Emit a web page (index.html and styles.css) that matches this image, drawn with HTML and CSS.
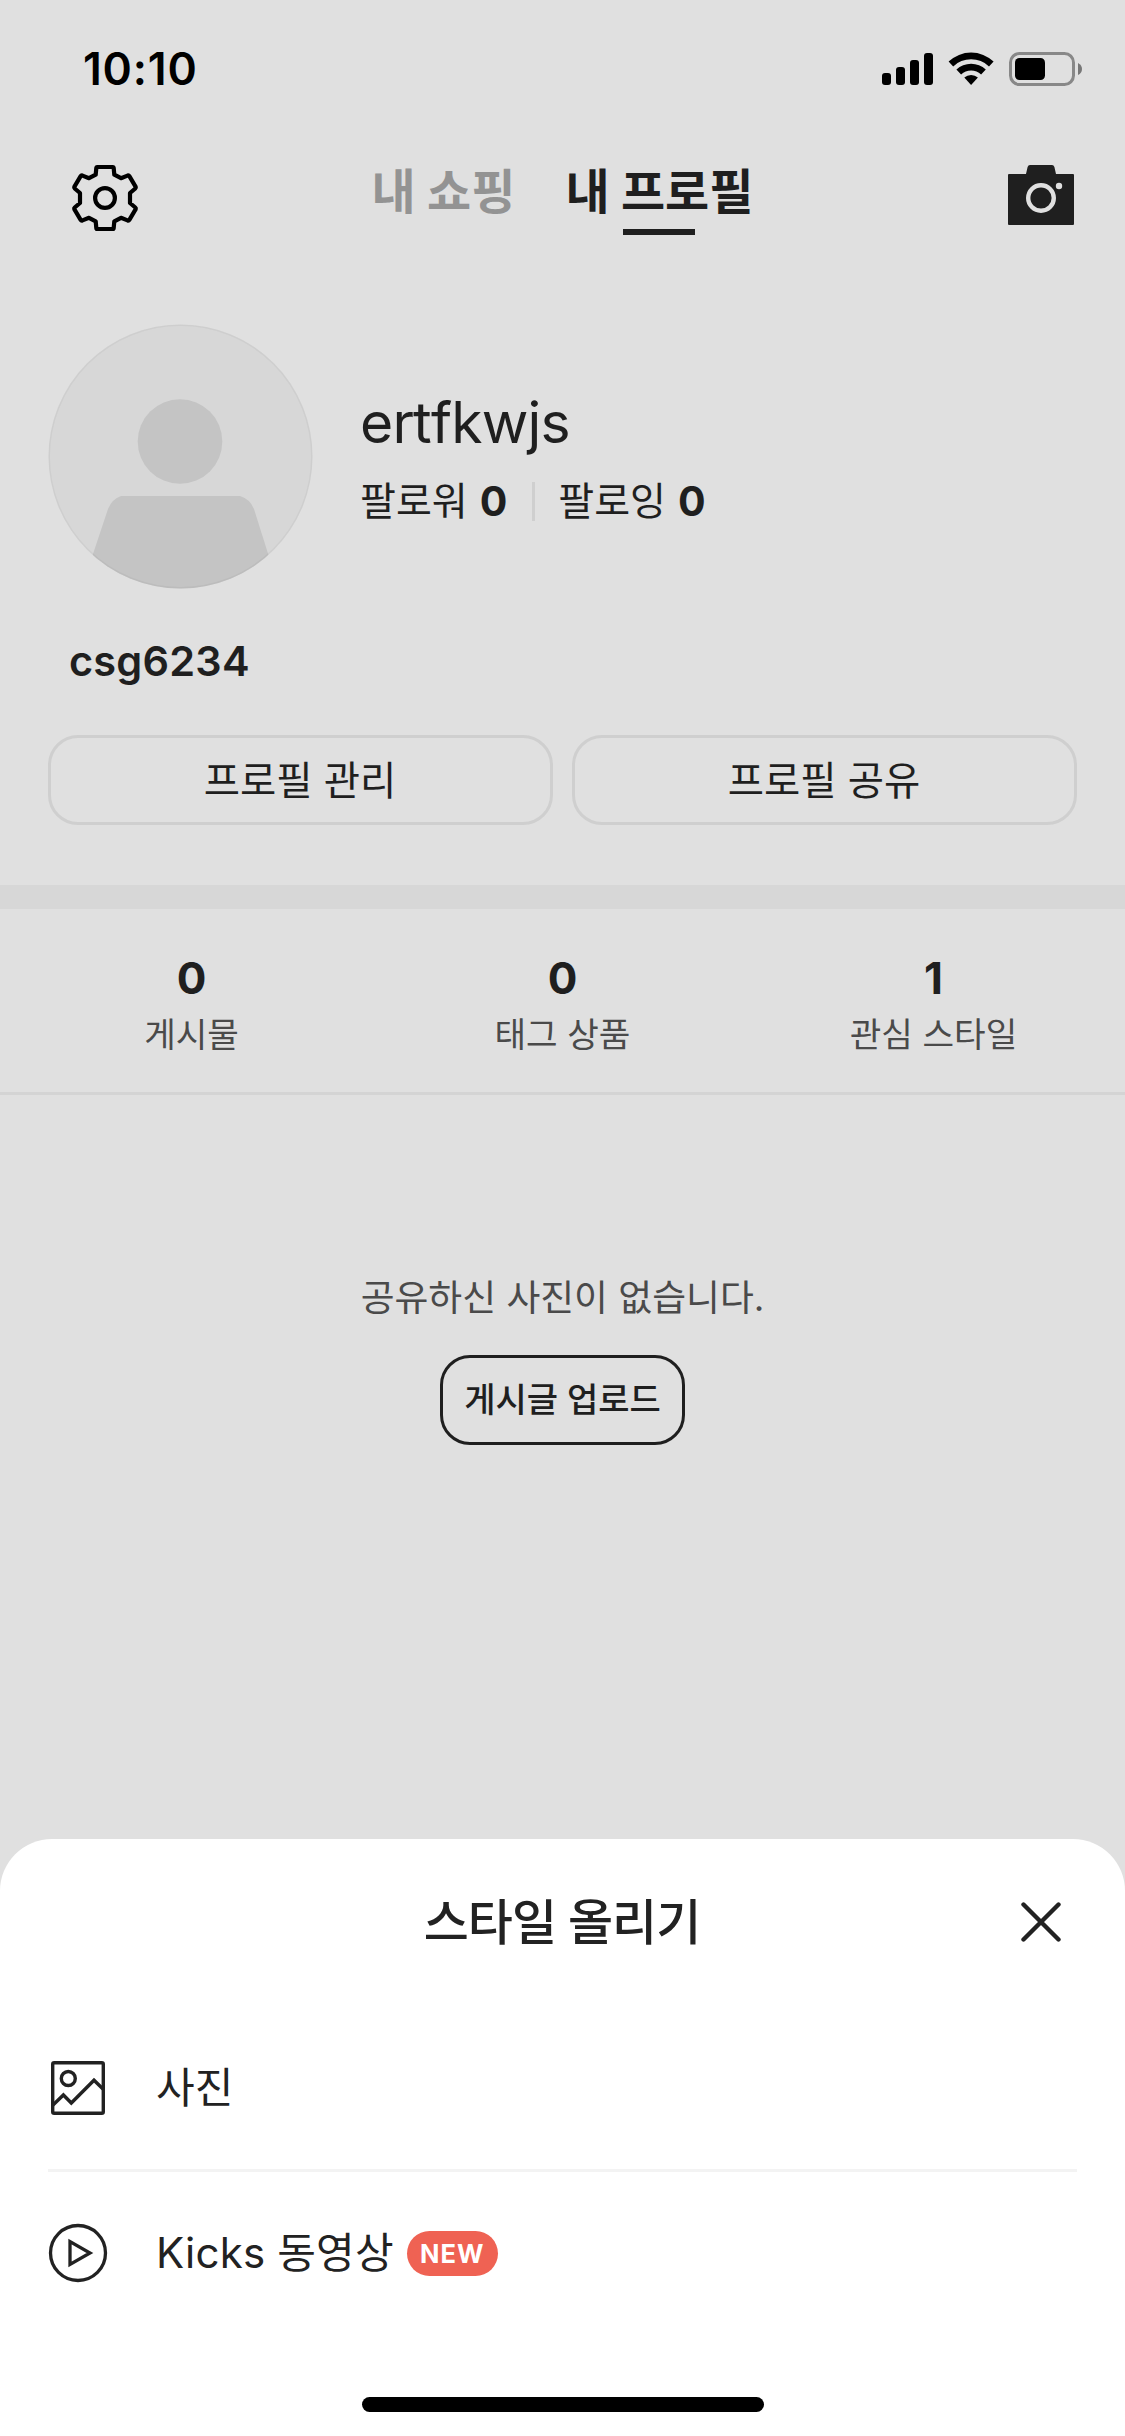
FILE: index.html
```html
<!DOCTYPE html>
<html lang="ko">
<head>
<meta charset="utf-8">
<title>내 프로필</title>
<link rel="stylesheet" href="styles.css">
</head>
<body>
<div class="screen">
  <header class="status">
    <span class="time">10:10</span>
    <svg class="status-icons" width="202" height="36" viewBox="881 51 202 36">
      <rect x="882" y="73" width="9" height="12" rx="3"/>
      <rect x="896" y="67" width="9" height="18" rx="3"/>
      <rect x="910" y="60" width="9" height="25" rx="3"/>
      <rect x="924" y="53" width="9" height="32" rx="3"/>
      <path d="M948.6 61.6A32.5 32.5 0 0 1 993.6 61.6L989 66.4A26 26 0 0 0 953.2 66.4Z"/>
      <path d="M956.4 69.6A21.3 21.3 0 0 1 985.8 69.6L981.1 74.4A14.7 14.7 0 0 0 961.1 74.4Z"/>
      <path d="M964.3 77.6A10 10 0 0 1 977.9 77.6L971.1 85Z"/>
      <rect x="1010.5" y="53.5" width="63" height="31" rx="9" fill="none" stroke="#888" stroke-width="3"/>
      <rect x="1015" y="58" width="30" height="22" rx="4.5"/>
      <path d="M1078 63V75Q1082 73 1082 69T1078 63Z" fill="#777"/>
    </svg>
  </header>

  <nav class="nav">
    <svg class="gear" width="68" height="68" viewBox="0 0 68 68" fill="none" stroke="#000" stroke-width="4.2" stroke-linejoin="round">
      <path d="M26.2 3H41.8Q42.6 3 42.7 4L43.3 10.7L50 14.2L56.5 11.6Q57.8 11.2 58.5 12.4L64.7 22.8Q65.1 23.8 64.3 24.5L59 29V39L64.3 43.5Q65.1 44.2 64.7 45.2L58.5 55.6Q57.8 56.8 56.5 56.4L50 53.8L43.3 57.3L42.7 64Q42.6 65 41.8 65H26.2Q25.4 65 25.3 64L24.7 57.3L18 53.8L11.5 56.4Q10.2 56.8 9.5 55.6L3.3 45.2Q2.9 44.2 3.7 43.5L9 39V29L3.7 24.5Q2.9 23.8 3.3 22.8L9.5 12.4Q10.2 11.2 11.5 11.6L18 14.2L24.7 10.7L25.3 4Q25.4 3 26.2 3Z"/>
      <circle cx="34" cy="34" r="9.9"/>
    </svg>
    <div class="tabs">
      <span class="tab">내 쇼핑</span>
      <span class="tab tab-active">내 프로필</span>
    </div>
    <svg class="camera" width="66" height="60" viewBox="1008 165 66 60">
      <path d="M1009 174H1026L1027.6 167Q1028.2 165 1030 165H1052Q1053.8 165 1054.4 167L1056 174H1073Q1074 174 1074 175V224Q1074 225 1073 225H1009Q1008 225 1008 224V175Q1008 174 1009 174Z" fill="#1f1f1f"/>
      <circle cx="1041" cy="198" r="12.8" fill="none" stroke="#e0e0e0" stroke-width="4.4"/>
      <circle cx="1059" cy="186" r="3.2" fill="#e0e0e0"/>
    </svg>
  </nav>

  <section class="profile">
    <svg class="avatar" width="265" height="265" viewBox="0 0 265 265">
      <clipPath id="round"><circle cx="132.5" cy="132.5" r="132"/></clipPath>
      <g clip-path="url(#round)">
        <rect width="265" height="265" fill="#d7d7d7"/>
        <circle cx="132" cy="117.5" r="42.3" fill="#c4c4c4"/>
        <path d="M73 172H192Q202 175 206 185L222 236V265H43V236L60 185Q64 175 73 172Z" fill="#c4c4c4"/>
      </g>
      <circle cx="132.5" cy="132.5" r="131.3" fill="none" stroke="#000" stroke-opacity=".04" stroke-width="1.6"/>
    </svg>
    <div class="who">
      <h1 class="handle">ertfkwjs</h1>
      <div class="follows">
        <span>팔로워</span><b>0</b><i class="bar"></i><span>팔로잉</span><b>0</b>
      </div>
    </div>
  </section>
  <p class="nickname">csg6234</p>
  <div class="actions">
    <button class="action">프로필 관리</button>
    <button class="action">프로필 공유</button>
  </div>

  <section class="stats">
    <div class="stat"><b>0</b><span>게시물</span></div>
    <div class="stat"><b>0</b><span>태그 상품</span></div>
    <div class="stat"><b>1</b><span>관심 스타일</span></div>
  </section>

  <section class="empty">
    <p class="empty-text">공유하신 사진이 없습니다.</p>
    <button class="upload">게시글 업로드</button>
  </section>

  <section class="sheet">
    <div class="sheet-head">
      <h2 class="sheet-title">스타일 올리기</h2>
      <svg class="close" width="40" height="40" viewBox="0 0 40 40" stroke="#222" stroke-width="4.4" stroke-linecap="round"><path d="M2.5 2.5L37.5 37.5M37.5 2.5L2.5 37.5"/></svg>
    </div>
    <div class="option option-photo">
      <svg class="option-icon" width="60" height="60" viewBox="0 0 60 60" fill="none" stroke="#222" stroke-width="3.4">
        <rect x="4.7" y="4.7" width="50.6" height="50.6" rx="1.5"/>
        <circle cx="20.3" cy="20.5" r="7"/>
        <path d="M5 47L15.4 37L23.3 45L46 22.2L55 31"/>
      </svg>
      <span class="option-label">사진</span>
    </div>
    <div class="option">
      <svg class="option-icon" width="60" height="60" viewBox="0 0 60 60" fill="none" stroke="#222" stroke-width="3.3">
        <circle cx="30" cy="30" r="27.5"/>
        <path d="M22 18.6V41.4L42 30Z"/>
      </svg>
      <span class="option-label kicks">Kicks 동영상</span>
      <span class="badge">NEW</span>
    </div>
    <div class="home"></div>
  </section>
</div>
</body>
</html>
```
FILE: styles.css
```css
* { box-sizing: border-box; margin: 0; padding: 0; }
body {
  font-family: Inter, "Noto Sans CJK KR", sans-serif;
  color: #1f1f1f;
  background: #e0e0e0;
}
button { font: inherit; color: inherit; background: none; }
svg { display: block; flex: none; }
.screen { position: relative; width: 1125px; height: 2436px; overflow: hidden; background: #e0e0e0; white-space: nowrap; }

.status { display: flex; justify-content: space-between; align-items: center; height: 138px; padding: 0 42px 0 83px; color: #000; }
.time { font-size: 44.5px; font-weight: 600; letter-spacing: 0.8px; }

.nav { display: grid; grid-template-columns: 1fr auto 1fr; align-items: start; height: 186px; padding: 24px 51px 0; }
.gear { margin: 2px 0 0 20px; }
.camera { margin-top: 3px; justify-self: end; }
.tabs { display: flex; gap: 50px; }
.tab { display: flex; flex-direction: column; align-items: center; font-size: 48px; line-height: 60px; font-weight: 700; color: #939393; }
.tab-active { color: #1f1f1f; }
.tab-active::after { content: ""; width: 72px; height: 6px; margin-top: 7px; background: #1f1f1f; }

.profile { display: flex; gap: 47px; padding: 0 48px; height: 264px; }
.who { padding-top: 61px; }
.handle { font-size: 57px; line-height: 76px; font-weight: 400; letter-spacing: -0.8px; font-kerning: none; }
.follows { display: flex; align-items: center; height: 40px; margin-top: 20px; font-size: 39px; line-height: 40px; }
.follows b { margin-left: 12px; font-size: 41px; font-weight: 700; }
.bar { width: 3px; height: 39px; margin: 0 23px 0 25px; background: #cfcfcf; }
.nickname { margin: 48px 0 0 69px; font-size: 41.5px; line-height: 50px; font-weight: 600; letter-spacing: 0.2px; }
.actions { display: grid; grid-template-columns: 1fr 1fr; gap: 19px; margin-top: 49px; padding: 0 48px; }
.action { height: 90px; padding: 0 1px 5px 0; border: 3px solid #cfcfcf; border-radius: 30px; font-size: 39.4px; }

.stats { display: grid; grid-template-columns: repeat(3, 1fr); height: 210px; margin-top: 60px; padding: 43px 6px 0; border-top: 24px solid #d7d7d7; border-bottom: 3px solid #d4d4d4; }
.stat { display: flex; flex-direction: column; align-items: center; }
.stat b { font-size: 44px; line-height: 52px; font-weight: 700; }
.stat span { margin-top: 5px; font-size: 34.3px; line-height: 51px; color: #4a4a4a; }

.empty { display: flex; flex-direction: column; align-items: center; padding-top: 178px; }
.empty-text { font-size: 36.8px; line-height: 50px; color: #4a4a4a; }
.upload { width: 245px; height: 90px; margin-top: 32px; padding-bottom: 5px; border: 3px solid #1f1f1f; border-radius: 30px; font-size: 34px; font-weight: 500; }

.sheet { position: absolute; left: 0; right: 0; bottom: 0; height: 597px; padding: 0 48px; background: #fff; border-radius: 52px 52px 0 0; color: #222; }
.sheet-head { display: grid; grid-template-columns: 1fr auto 1fr; align-items: center; height: 165px; }
.sheet-title { grid-column: 2; padding: 2px 1px 0 0; font-size: 49px; line-height: 60px; font-weight: 500; letter-spacing: -1px; }
.close { justify-self: end; margin-right: 16px; }
.option { display: flex; align-items: center; height: 165px; }
.option-photo { padding-top: 3px; }
.option + .option { border-top: 3px solid #f3f3f3; }
.option-icon { margin-right: 48px; }
.option-label { font-size: 42px; line-height: 60px; }
.kicks { letter-spacing: 0.2px; }
.badge { display: flex; align-items: center; justify-content: center; width: 91px; height: 45px; margin-left: 13px; border-radius: 23px; background: #ef6253; color: #fff; font-size: 25.5px; font-weight: 700; letter-spacing: 1px; }
.home { width: 402px; height: 15px; margin: 63px auto 0; border-radius: 8px; background: #000; }
```
